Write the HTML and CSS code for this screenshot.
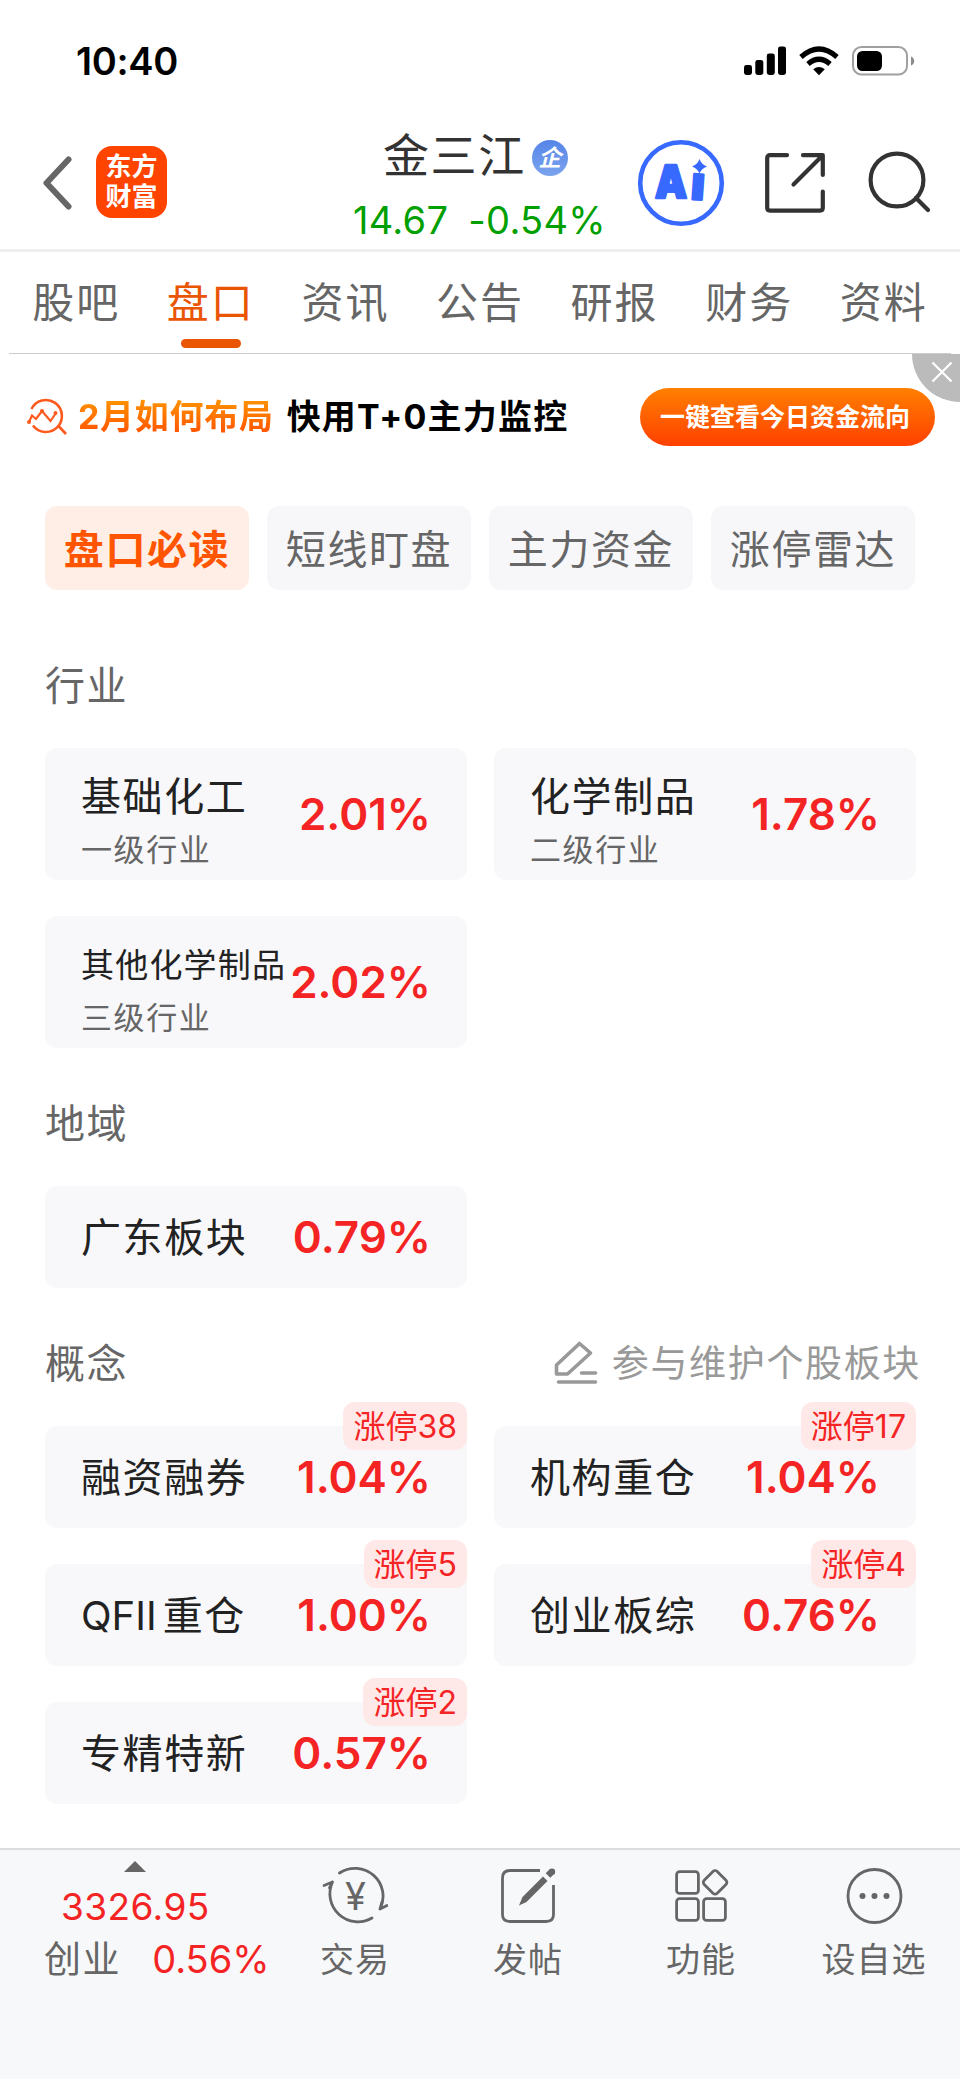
FILE: index.html
```
<!DOCTYPE html>
<html lang="zh-CN">
<head>
    <meta charset="UTF-8">
    <meta name="viewport" content="width=device-width, initial-scale=1.0">
    <title>金三江 - 盘口</title>
    <link rel="stylesheet" href="styles.css">
</head>
<body>
    <div class="status-bar">
        <span class="time">10:40</span>
        <div class="status-icons">
            <svg width="42" height="30" viewBox="0 0 42 30">
                <rect x="0" y="19" width="8" height="10" rx="2.4"/>
                <rect x="11.3" y="14" width="8" height="15" rx="2.4"/>
                <rect x="22.8" y="7.500" width="8" height="21.500" rx="2.4"/>
                <rect x="34" y="0.500" width="8" height="28.500" rx="2.4"/>
            </svg>
            <svg width="40" height="30" viewBox="0 0 40 30">
                <path d="M2 11Q20 -5 38 11" fill="none" stroke="#000" stroke-width="5.200"/>
                <path d="M9 18Q20 8.500 31 18" fill="none" stroke="#000" stroke-width="5.200"/>
                <path d="M14.200 23.200Q20 18.600 25.800 23.200L20 29.200Z"/>
            </svg>
            <svg width="63" height="30" viewBox="0 0 63 30">
                <rect x="1" y="1" width="54" height="27.500" rx="8.500" fill="none" stroke="#a0a0a0" stroke-width="2"/>
                <rect x="5" y="5" width="25" height="20" rx="5.500"/>
                <path d="M59 10.500Q62.200 12 62.200 15Q62.200 18 59 19.500Z" fill="#8c8c8c"/>
            </svg>
        </div>
    </div>

    <header class="nav">
        <div class="nav-left">
            <svg width="30" height="54" viewBox="0 0 30 54">
                <path d="M26.500 3.500L4.500 27L26.500 50.500" fill="none" stroke="#666" stroke-width="6" stroke-linecap="round" stroke-linejoin="round"/>
            </svg>
            <div class="logo"><span>东方</span><span>财富</span></div>
        </div>
        <div class="stock">
            <div class="stock-name">金三江<span class="tag">企</span></div>
            <div class="stock-price"><span>14.67</span><span>-0.54%</span></div>
        </div>
        <div class="nav-right">
            <svg class="ai-icon" width="88" height="88" viewBox="0 0 88 88">
                <circle cx="44" cy="44" r="40.800" fill="#fff" stroke="#3769ff" stroke-width="4.600"/>
                <text class="ai-text" x="18" y="58.500" textLength="32" lengthAdjust="spacingAndGlyphs">A</text>
                <text class="ai-text" x="54" y="60.500" transform="rotate(4 60 50)">ı</text>
                <path d="M62.500 20Q64.500 25.500 70 27.500Q64.500 29.500 62.500 34.500Q60.500 29.500 55 27.500Q60.500 25.500 62.500 20Z" fill="#3769ff"/>
            </svg>
            <svg class="share-icon" width="60" height="60" viewBox="0 0 60 60">
                <path d="M22 2.200H5Q2.200 2.200 2.200 5V54.800Q2.200 57.600 5 57.600H55Q57.800 57.600 57.800 54.800V38.500M38 2.200H57.800V22M57 3L28.500 31.500"/>
            </svg>
            <svg class="search-icon" width="64" height="64" viewBox="0 0 64 64">
                <circle cx="29" cy="29" r="26.400"/>
                <path d="M48 47L60 59"/>
            </svg>
        </div>
    </header>

    <nav class="tabs">
        <a class="tab">股吧</a>
        <a class="tab active">盘口</a>
        <a class="tab">资讯</a>
        <a class="tab">公告</a>
        <a class="tab">研报</a>
        <a class="tab">财务</a>
        <a class="tab">资料</a>
    </nav>

    <div class="banner">
        <svg class="banner-icon" width="40" height="40" viewBox="0 0 40 40">
            <g fill="none" stroke="#ff5a1e" stroke-width="2.600">
                <path d="M4.500 12A16 16 0 1 1 6 28.500M31.500 29L39 37"/>
                <path d="M2 25L5 18.500L9 22L15 14L23.500 24L29 16" stroke-width="2.200"/>
            </g>
            <g fill="#ff5a1e"><circle cx="2" cy="25" r="2"/><circle cx="15" cy="14" r="2"/><circle cx="28.500" cy="16" r="2"/></g>
        </svg>
        <span class="banner-hot">2月如何布局</span>
        <span class="banner-text">快用T+0主力监控</span>
        <a class="banner-btn">一键查看今日资金流向</a>
        <div class="banner-close">
            <svg width="22" height="22" viewBox="0 0 22 22">
                <path d="M1.500 1.500L20.500 20.500M20.500 1.500L1.500 20.500" fill="none" stroke="#fff" stroke-width="2.200"/>
            </svg>
        </div>
    </div>

    <main class="content">
        <div class="chips">
            <a class="chip active">盘口必读</a>
            <a class="chip">短线盯盘</a>
            <a class="chip">主力资金</a>
            <a class="chip">涨停雷达</a>
        </div>

        <section class="section first">
            <div class="section-head"><h2>行业</h2></div>
            <div class="grid">
                <div class="card tall">
                    <div class="info"><div class="name">基础化工</div><div class="level">一级行业</div></div>
                    <div class="rate">2.01%</div>
                </div>
                <div class="card tall">
                    <div class="info"><div class="name">化学制品</div><div class="level">二级行业</div></div>
                    <div class="rate">1.78%</div>
                </div>
                <div class="card tall">
                    <div class="info"><div class="name small">其他化学制品</div><div class="level">三级行业</div></div>
                    <div class="rate">2.02%</div>
                </div>
            </div>
        </section>

        <section class="section">
            <div class="section-head"><h2>地域</h2></div>
            <div class="grid">
                <div class="card"><div class="name">广东板块</div><div class="rate">0.79%</div></div>
            </div>
        </section>

        <section class="section">
            <div class="section-head">
                <h2>概念</h2>
                <a class="edit-link">
                    <svg width="44" height="44" viewBox="0 0 44 44">
                        <path d="M2.500 33V24L25.500 2.500L36.500 12L13.500 33ZM27.500 32H41.500M4.500 41H41.500" fill="none" stroke="#999" stroke-width="3.600" stroke-linecap="round" stroke-linejoin="round"/>
                    </svg>
                    <span>参与维护个股板块</span>
                </a>
            </div>
            <div class="grid">
                <div class="card"><div class="name">融资融券</div><div class="rate">1.04%</div><span class="limit">涨停38</span></div>
                <div class="card"><div class="name">机构重仓</div><div class="rate">1.04%</div><span class="limit">涨停17</span></div>
                <div class="card"><div class="name"><span class="latin">QFII</span>重仓</div><div class="rate">1.00%</div><span class="limit">涨停5</span></div>
                <div class="card"><div class="name">创业板综</div><div class="rate">0.76%</div><span class="limit">涨停4</span></div>
                <div class="card"><div class="name">专精特新</div><div class="rate">0.57%</div><span class="limit">涨停2</span></div>
            </div>
        </section>
    </main>

    <footer class="toolbar">
        <div class="index">
            <svg class="arrow" width="22" height="11" viewBox="0 0 22 11"><path d="M11 0L22 11H0Z" fill="#666"/></svg>
            <div class="index-value">3326.95</div>
            <div class="index-row"><span class="index-name">创业</span><span class="index-rate">0.56%</span></div>
        </div>
        <a class="tool">
            <svg width="66" height="60" viewBox="0 0 66 60">
                <g fill="none" stroke="#666" stroke-width="2.800" stroke-linecap="round" stroke-linejoin="round">
                    <path d="M17.500 7A28 28 0 0 1 58 43L65 39.500M58 43L60 36"/>
                    <path d="M50 52A28 28 0 0 1 10.500 16L2 19.500M10.500 16L7.500 22"/>
                </g>
                <text class="yuan" x="33.500" y="43.500">¥</text>
            </svg>
            <span>交易</span>
        </a>
        <a class="tool">
            <svg width="60" height="60" viewBox="0 0 60 60">
                <path d="M42 4.500H12Q4.500 4.500 4.500 12V48.500Q4.500 55.500 12 55.500H48Q55.500 55.500 55.500 48.500V19" fill="none" stroke="#666" stroke-width="2.800"/>
                <path d="M45 10.500L49.500 15L28.500 36L21 39.500L24.500 31Z" fill="#666"/>
                <path d="M50 9.500L54 5.500" stroke="#666" stroke-width="6.500"/>
                <circle cx="54" cy="5.800" r="3.200" fill="#666"/>
            </svg>
            <span>发帖</span>
        </a>
        <a class="tool">
            <svg width="60" height="60" viewBox="0 0 60 60">
                <g fill="none" stroke="#666" stroke-width="2.800">
                    <rect x="5.600" y="5.600" width="21.800" height="21.800" rx="3"/>
                    <rect x="5.600" y="32.600" width="21.800" height="21.800" rx="3"/>
                    <rect x="32.600" y="32.600" width="21.800" height="21.800" rx="3"/>
                    <rect x="34.900" y="7.100" width="18.400" height="18.400" rx="3" transform="rotate(45 44.100 16.300)"/>
                </g>
            </svg>
            <span>功能</span>
        </a>
        <a class="tool">
            <svg width="60" height="60" viewBox="0 0 60 60">
                <circle cx="30.500" cy="30" r="26.500" fill="none" stroke="#666" stroke-width="2.800"/>
                <g fill="#666"><circle cx="18.500" cy="30" r="3"/><circle cx="30.500" cy="30" r="3"/><circle cx="42.500" cy="30" r="3"/></g>
            </svg>
            <span>设自选</span>
        </a>
    </footer>
</body>
</html>
```
FILE: styles.css
```
* {
    box-sizing: border-box;
}

body {
    margin: 0;
    width: 960px;
    height: 2079px;
    display: flex;
    flex-direction: column;
    background: #fff;
    color: #666;
    font-family: Inter, "Noto Sans CJK SC", sans-serif;
    overflow: hidden;
}

svg {
    display: block;
    flex: none;
}

/* barra de estado */
.status-bar {
    height: 122px;
    display: flex;
    align-items: center;
    justify-content: space-between;
    padding: 0 45px 0 76px;
}

.time {
    font-size: 38px;
    font-weight: 600;
    color: #000;
    letter-spacing: -0.3px;
}

.status-icons {
    display: flex;
    gap: 13px;
}

/* header */
.nav {
    height: 130px;
    display: flex;
    padding: 0 28px 0 42px;
    border-bottom: 3px solid #eee;
}

.nav-left,
.nav-right {
    display: flex;
    align-items: center;
    height: 122px;
}

.nav-left {
    width: 311px;
    gap: 24px;
}

.logo {
    width: 71px;
    height: 72px;
    margin-top: -2px;
    border-radius: 16px;
    background: #ff4400;
    color: #fff;
    display: flex;
    flex-direction: column;
    align-items: center;
    justify-content: center;
    font-size: 26px;
    font-weight: 700;
    line-height: 30px;
}

.stock {
    width: 253px;
    height: 124px;
}

.stock-name {
    display: flex;
    align-items: center;
    height: 67px;
    padding-left: 30px;
    font-size: 46px;
    letter-spacing: 1.6px;
    line-height: 63px;
    color: #333;
}

.tag {
    width: 36px;
    height: 36px;
    margin: 4px 0 0 6px;
    border-radius: 50%;
    background: linear-gradient(#5585e8, #7ba3ee);
    color: #fff;
    font-size: 23px;
    font-weight: 700;
    font-style: italic;
    letter-spacing: 0;
    line-height: 36px;
    text-align: center;
}

.stock-price {
    display: flex;
    justify-content: space-between;
    font-size: 38px;
    line-height: 63px;
    letter-spacing: 0.3px;
    color: #00a000;
}

.nav-right {
    margin-left: auto;
}

.share-icon {
    margin-left: 40px;
}

.search-icon {
    margin-left: 43px;
}

.share-icon,
.search-icon {
    fill: none;
    stroke: #333;
    stroke-width: 4.2;
    stroke-linecap: round;
    stroke-linejoin: round;
}

.ai-text {
    font-family: Inter, sans-serif;
    font-size: 46px;
    font-weight: 900;
    fill: #3769ff;
    stroke: #3769ff;
    stroke-width: 2.5;
    stroke-linejoin: round;
}

/* tabs */
.tabs {
    display: flex;
    height: 102px;
    margin: 0 9px;
    border-bottom: 1px solid #ccc;
}

.tab {
    flex: 1;
    font-size: 42px;
    letter-spacing: 2px;
    line-height: 102px;
    text-align: center;
    position: relative;
}

.tab.active {
    color: #ea5504;
}

.tab.active::after {
    content: '';
    position: absolute;
    left: 50%;
    bottom: 5px;
    width: 60px;
    height: 9px;
    margin-left: -30px;
    border-radius: 5px;
    background: #ea5504;
}

/* banner */
.banner {
    height: 126px;
    display: flex;
    align-items: center;
    padding: 0 25px 0 27px;
    position: relative;
    font-size: 34px;
    font-weight: 700;
    line-height: 52px;
    white-space: nowrap;
}

.banner-hot {
    margin-left: 11px;
    letter-spacing: 0.7px;
    background: linear-gradient(#ff9500 15%, #ff5000 85%);
    -webkit-background-clip: text;
    background-clip: text;
    color: transparent;
}

.banner-text {
    margin-left: 13px;
    letter-spacing: 1.2px;
    color: #000;
}

.banner-btn {
    width: 295px;
    height: 58px;
    margin-left: auto;
    padding-right: 5px;
    border-radius: 29px;
    background: linear-gradient(#ff8000, #ff4000);
    color: #fff;
    font-size: 25px;
    line-height: 59px;
    text-align: center;
}

.banner-close {
    position: absolute;
    top: 0;
    right: 0;
    width: 48px;
    height: 48px;
    padding: 7px 0 0 19px;
    border-bottom-left-radius: 48px;
    background: #bbb;
}

/* contenido */
.content {
    flex: 1;
    padding: 26px 44px 0 45px;
}

.chips {
    display: flex;
    gap: 18px;
}

.chip {
    width: 204px;
    height: 84px;
    border-radius: 12px;
    background: #f7f7fa;
    font-size: 40px;
    letter-spacing: 1.6px;
    line-height: 87px;
    text-align: center;
}

.chip.active {
    background: #ffeee6;
    color: #ff5500;
    font-weight: 600;
}

.section {
    padding-top: 46px;
}

.section.first {
    padding-top: 66px;
}

.section-head {
    display: flex;
    justify-content: space-between;
    height: 60px;
    margin-bottom: 32px;
    line-height: 60px;
}

h2 {
    margin: 0;
    font-size: 40px;
    font-weight: 400;
    letter-spacing: 1.6px;
}

.edit-link {
    display: flex;
    align-items: center;
    gap: 14px;
    margin-right: -5px;
    font-size: 37px;
    letter-spacing: 1.65px;
    color: #999;
}

.edit-link svg {
    margin-top: -2px;
}

.grid {
    display: grid;
    grid-template-columns: 422px 422px;
    gap: 36px 27px;
}

.card {
    display: flex;
    align-items: center;
    justify-content: space-between;
    height: 102px;
    padding: 0 36px;
    border-radius: 12px;
    background: #f8f8fa;
    position: relative;
    white-space: nowrap;
}

.card.tall {
    height: 132px;
}

.name {
    padding-top: 2px;
    font-size: 40px;
    line-height: 54px;
    letter-spacing: 1.6px;
    color: #222;
}

.name.small {
    width: 200px;
    font-size: 33px;
    letter-spacing: 1.2px;
}

.latin {
    margin-right: 6px;
    letter-spacing: 0;
}

.info {
    height: 132px;
    padding-top: 20px;
}

.level {
    font-size: 31px;
    line-height: 51px;
    letter-spacing: 1.6px;
}

.rate {
    font-size: 44px;
    font-weight: 600;
    color: #f52424;
}

.limit {
    position: absolute;
    top: -24px;
    right: 0;
    height: 48px;
    padding: 0 10px;
    border-radius: 12px;
    background: #ffe8e8;
    color: #f52424;
    font-size: 32px;
    line-height: 49px;
}

/* barra inferior */
.toolbar {
    display: flex;
    height: 231px;
    border-top: 2px solid #ddd;
    background: #f7f8fa;
}

.index {
    width: 268px;
    display: flex;
    flex-direction: column;
    padding: 11px 0 0 44px;
    color: #f52424;
    font-size: 37px;
    white-space: nowrap;
}

.arrow {
    margin-left: 80px;
}

.index-value {
    margin-left: 17px;
    margin-top: 9px;
    line-height: 52px;
    letter-spacing: 0.4px;
}

.index-row {
    display: flex;
    gap: 31px;
    line-height: 53px;
}

.index-name {
    color: #666;
    letter-spacing: 1.6px;
}

.index-rate {
    font-size: 38px;
}

.tool {
    width: 173px;
    display: flex;
    flex-direction: column;
    align-items: center;
    padding-top: 16px;
    font-size: 34px;
    line-height: 68px;
    letter-spacing: 1px;
}

.tool span {
    padding-left: 1px;
}

.yuan {
    font-family: Inter, sans-serif;
    font-size: 38px;
    letter-spacing: 0;
    text-anchor: middle;
    fill: #666;
}
```
